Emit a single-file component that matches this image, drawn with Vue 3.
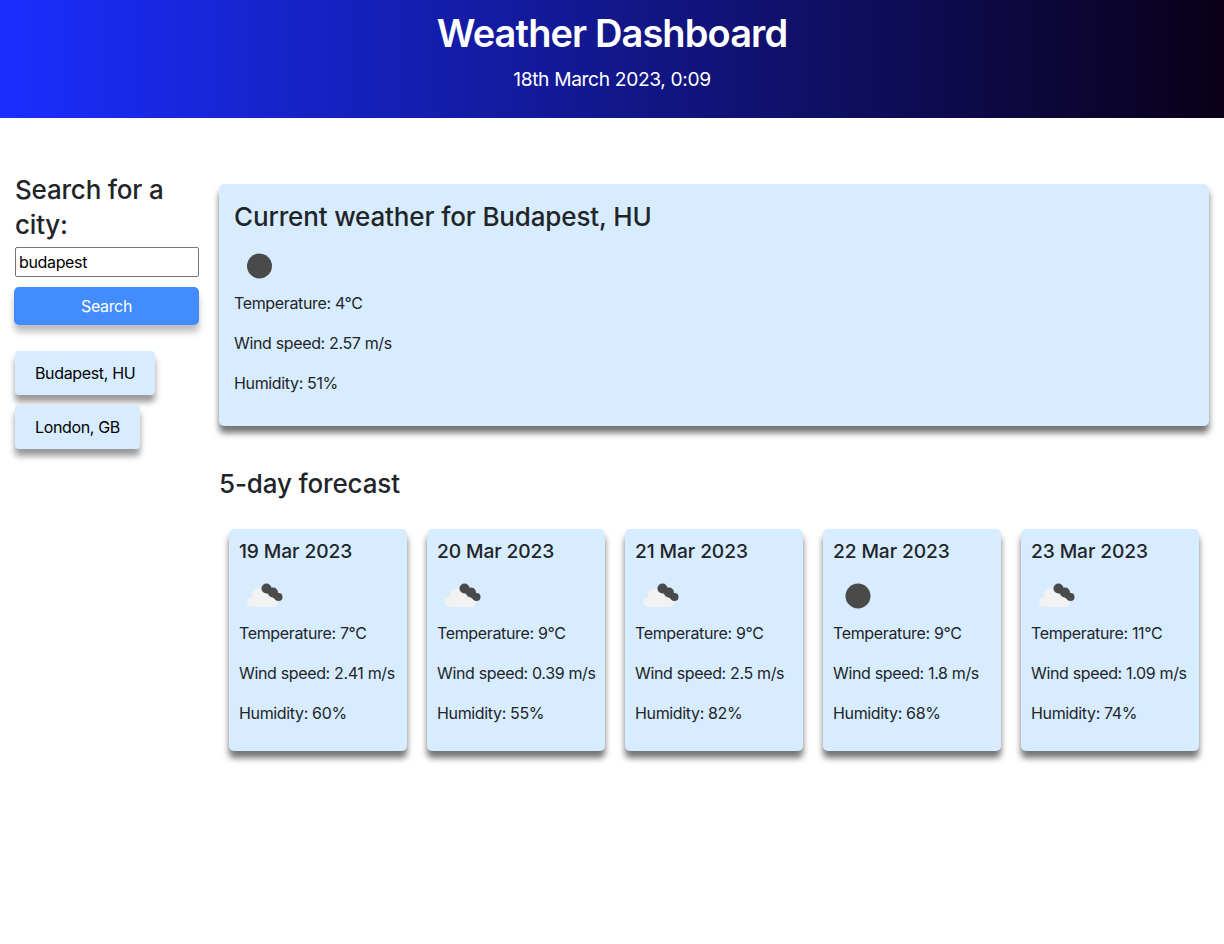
<template>
  <div class="page">
    <header class="top">
      <h1>Weather Dashboard</h1>
      <p>18th March 2023, 0:09</p>
    </header>

    <div class="layout">
      <aside class="side">
        <h3>Search for a city:</h3>
        <input class="city-input" type="text" value="budapest" />
        <button class="search-btn">Search</button>
        <div class="history">
          <button v-for="city in history" :key="city" class="history-btn">{{ city }}</button>
        </div>
      </aside>

      <main class="content">
        <section class="current">
          <h2>Current weather for Budapest, HU</h2>
          <div class="icon-box">
            <svg class="icon" viewBox="0 0 50 50">
              <circle cx="25.5" cy="25" r="12.5" fill="#4a4a4a" />
            </svg>
          </div>
          <p>Temperature: 4°C</p>
          <p>Wind speed: 2.57 m/s</p>
          <p>Humidity: 51%</p>
        </section>

        <h2 class="forecast-title">5-day forecast</h2>

        <div class="forecast">
          <article v-for="day in days" :key="day.date" class="day">
            <h4>{{ day.date }}</h4>
            <div class="icon-box">
              <svg v-if="day.cloudy" class="icon" viewBox="0 0 50 50">
                <g fill="#f2f2f2">
                  <circle cx="13" cy="31" r="5" />
                  <circle cx="21" cy="25" r="8" />
                  <circle cx="34" cy="31" r="5" />
                  <rect x="13" y="27" width="21" height="9" />
                </g>
                <g fill="#4a4a4a">
                  <path d="M27 17 L39 26" stroke="#4a4a4a" stroke-width="7" />
                  <circle cx="27.500" cy="17.500" r="5" />
                  <circle cx="34" cy="21.500" r="5" />
                  <circle cx="39.500" cy="26" r="4" />
                </g>
              </svg>
              <svg v-else class="icon" viewBox="0 0 50 50">
                <circle cx="25" cy="25" r="12.5" fill="#4a4a4a" />
              </svg>
            </div>
            <p>Temperature: {{ day.temp }}°C</p>
            <p>Wind speed: {{ day.wind }} m/s</p>
            <p>Humidity: {{ day.humidity }}%</p>
          </article>
        </div>
      </main>
    </div>
  </div>
</template>

<script setup>
const history = ['Budapest, HU', 'London, GB']

const days = [
  { date: '19 Mar 2023', temp: 7, wind: '2.41', humidity: 60, cloudy: true },
  { date: '20 Mar 2023', temp: 9, wind: '0.39', humidity: 55, cloudy: true },
  { date: '21 Mar 2023', temp: 9, wind: '2.5', humidity: 82, cloudy: true },
  { date: '22 Mar 2023', temp: 9, wind: '1.8', humidity: 68, cloudy: false },
  { date: '23 Mar 2023', temp: 11, wind: '1.09', humidity: 74, cloudy: true },
]
</script>

<style>
html,
body {
  margin: 0;
  background: #fff;
}
</style>

<style scoped>
.page {
  min-height: 944px;
  font-family: Inter, "Liberation Sans", sans-serif;
  font-size: 16px;
  line-height: 24px;
  letter-spacing: -0.35px;
  color: #212529;
}

.top {
  height: 118px;
  box-sizing: border-box;
  padding-top: 9px;
  text-align: center;
  color: #fff;
  background: linear-gradient(90deg, #1a2eff 0%, #0a0018 100%);
}

.top h1 {
  margin: 0 0 7px;
  font-size: 38px;
  line-height: 48px;
  font-weight: 600;
  letter-spacing: -0.9px;
}

.top p {
  margin: 0;
  font-size: 19.2px;
  line-height: 30px;
  font-weight: 400;
  letter-spacing: -0.35px;
}

.layout {
  display: flex;
  padding-top: 54px;
}

.side {
  width: 204px;
  box-sizing: border-box;
  padding: 0 5px 0 15px;
  flex: none;
}

.side h3 {
  margin: 0 0 5px;
  font-size: 26px;
  line-height: 35px;
  font-weight: 500;
  letter-spacing: -0.2px;
}

.city-input {
  display: block;
  width: 184px;
  height: 30px;
  box-sizing: border-box;
  padding: 1px 3px;
  border: 1px solid #767676;
  border-radius: 2px;
  background: #fff;
  color: #000;
  font-family: inherit;
  font-size: 16px;
  letter-spacing: -0.35px;
}

.search-btn {
  display: block;
  width: 185px;
  height: 38px;
  margin: 10px 0 0 -1px;
  border: 0;
  border-radius: 5px;
  background: #428cff;
  color: #fff;
  font-family: inherit;
  font-size: 16px;
  letter-spacing: -0.35px;
  box-shadow: 0 7px 6px rgba(0, 0, 0, 0.25);
}

.history {
  margin-top: 26px;
  display: flex;
  flex-direction: column;
  align-items: flex-start;
  gap: 10px;
}

.history-btn {
  height: 44px;
  padding: 0 20px;
  border: 0;
  border-radius: 4px;
  background: #d8ecff;
  color: #000;
  font-family: inherit;
  font-size: 16px;
  letter-spacing: -0.35px;
  box-shadow: 0 7px 6px rgba(0, 0, 0, 0.4);
}

.content {
  flex: 1;
  min-width: 0;
  padding: 12px 15px 0;
}

.current {
  height: 242px;
  box-sizing: border-box;
  padding: 15px;
  border-radius: 5px;
  background: #d8ecff;
  box-shadow: 0 7px 6px rgba(0, 0, 0, 0.55);
}

h2 {
  margin: 0;
  font-size: 26px;
  line-height: 36px;
  font-weight: 500;
  letter-spacing: -0.15px;
}

.current .icon-box {
  margin-top: 6px;
}

.forecast-title {
  margin: 40px 0 0;
}

.forecast {
  display: flex;
  gap: 20px;
  margin-top: 27px;
  padding: 0 10px;
}

.day {
  flex: 1;
  min-width: 0;
  height: 222px;
  box-sizing: border-box;
  padding: 9px 10px 8px;
  border-radius: 5px;
  background: #d8ecff;
  box-shadow: 0 7px 6px rgba(0, 0, 0, 0.55);
}

.day h4 {
  margin: 0 0 7px;
  font-size: 19.2px;
  line-height: 26px;
  font-weight: 500;
  letter-spacing: -0.1px;
}

.icon-box {
  height: 50px;
}

.icon {
  display: block;
  width: 50px;
  height: 50px;
}

p {
  margin: 0 0 16px;
  white-space: nowrap;
}
</style>
